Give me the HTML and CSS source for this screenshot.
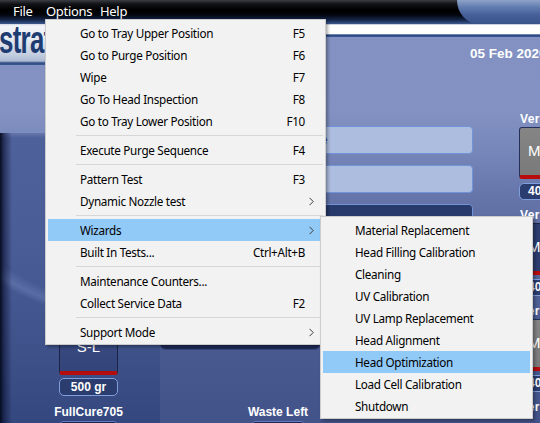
FILE: index.html
```html
<!DOCTYPE html>
<html lang="en">
<head>
<meta charset="utf-8">
<title>Options menu</title>
<link rel="stylesheet" href="styles.css">
</head>
<body>
<div class="app">
  <div class="menubar">
    <span class="mb-item mb-file">File</span>
    <span class="mb-item mb-options">Options</span>
    <span class="mb-item mb-help">Help</span>
    <span class="mb-fill"></span>
    <span class="mb-cap"></span>
  </div>
  <div class="top">
    <div class="logo"><span class="logo-text">stratasys</span></div>
    <div class="top-right">
      <div class="band"></div>
      <div class="date">05 Feb 2020</div>
    </div>
  </div>
  <div class="main">
    <div class="left-panel">
      <div class="cart">
        <div class="card card-support">S-L</div>
        <div class="weight">500 gr</div>
        <div class="cart-label">FullCure705</div>
        <div class="slot"></div>
      </div>
    </div>
    <div class="mid">
      <div class="fields">
        <div class="field light"><span class="field-text">Mode</span></div>
        <div class="field light"></div>
        <div class="field dark"></div>
      </div>
      <div class="status"></div>
      <div class="waste">
        <div class="cart-label">Waste Left</div>
        <div class="slot"></div>
      </div>
    </div>
    <div class="right">
      <div class="model">
        <div class="model-label">VeroWhite</div>
        <div class="card card-gray">M-L</div>
        <div class="weight weight-left">400 gr</div>
      </div>
      <div class="model">
        <div class="model-label">VeroBlue</div>
        <div class="card card-navy">M-L</div>
        <div class="weight weight-left">400 gr</div>
      </div>
      <div class="model">
        <div class="model-label">VeroBlack</div>
        <div class="card card-gray">M-L</div>
        <div class="weight weight-left">400 gr</div>
      </div>
      <div class="model">
        <div class="model-label">VeroClear</div>
      </div>
    </div>
  </div>

  <div class="menu main-menu">
    <div class="item"><span class="label">Go to Tray Upper Position</span><span class="key">F5</span><span class="arrow"></span></div>
    <div class="item"><span class="label">Go to Purge Position</span><span class="key">F6</span><span class="arrow"></span></div>
    <div class="item"><span class="label">Wipe</span><span class="key">F7</span><span class="arrow"></span></div>
    <div class="item"><span class="label">Go To Head Inspection</span><span class="key">F8</span><span class="arrow"></span></div>
    <div class="item"><span class="label">Go to Tray Lower Position</span><span class="key">F10</span><span class="arrow"></span></div>
    <div class="sep"></div>
    <div class="item"><span class="label">Execute Purge Sequence</span><span class="key">F4</span><span class="arrow"></span></div>
    <div class="sep"></div>
    <div class="item"><span class="label">Pattern Test</span><span class="key">F3</span><span class="arrow"></span></div>
    <div class="item"><span class="label">Dynamic Nozzle test</span><span class="key"></span><span class="arrow"><svg width="5" height="9" viewBox="0 0 5 9"><path d="M0.5 0.8 L4.2 4.5 L0.5 8.2" fill="none" stroke="#3a3a3a" stroke-width="1"/></svg></span></div>
    <div class="sep"></div>
    <div class="item active"><span class="label">Wizards</span><span class="key"></span><span class="arrow"><svg width="5" height="9" viewBox="0 0 5 9"><path d="M0.5 0.8 L4.2 4.5 L0.5 8.2" fill="none" stroke="#3a3a3a" stroke-width="1"/></svg></span></div>
    <div class="item"><span class="label">Built In Tests...</span><span class="key">Ctrl+Alt+B</span><span class="arrow"></span></div>
    <div class="sep"></div>
    <div class="item"><span class="label">Maintenance Counters...</span><span class="key"></span><span class="arrow"></span></div>
    <div class="item"><span class="label">Collect Service Data</span><span class="key">F2</span><span class="arrow"></span></div>
    <div class="sep"></div>
    <div class="item"><span class="label">Support Mode</span><span class="key"></span><span class="arrow"><svg width="5" height="9" viewBox="0 0 5 9"><path d="M0.5 0.8 L4.2 4.5 L0.5 8.2" fill="none" stroke="#3a3a3a" stroke-width="1"/></svg></span></div>
  </div>

  <div class="menu sub-menu">
    <div class="item"><span class="label">Material Replacement</span></div>
    <div class="item"><span class="label">Head Filling Calibration</span></div>
    <div class="item"><span class="label">Cleaning</span></div>
    <div class="item"><span class="label">UV Calibration</span></div>
    <div class="item"><span class="label">UV Lamp Replacement</span></div>
    <div class="item"><span class="label">Head Alignment</span></div>
    <div class="item active"><span class="label">Head Optimization</span></div>
    <div class="item"><span class="label">Load Cell Calibration</span></div>
    <div class="item"><span class="label">Shutdown</span></div>
  </div>
</div>
</body>
</html>
```

FILE: styles.css
```css
* { box-sizing: border-box; margin: 0; padding: 0; }

html, body {
  width: 540px;
  height: 423px;
  overflow: hidden;
  background: #43548b;
}

body {
  font-family: "Liberation Sans", Arial, sans-serif;
}

.app {
  position: relative;
  width: 540px;
  height: 423px;
  overflow: hidden;
  background: linear-gradient(to bottom,
    #8291c1 0, #8392c2 110px, #7787ba 150px, #6474a9 200px,
    #55669c 260px, #4a5b92 330px, #42538a 423px);
}

/* ---------- menu bar ---------- */
.menubar {
  display: flex;
  height: 24px;
  padding-left: 13px;
  background: linear-gradient(to bottom,
    #3a3d44 0, #121316 4px, #000 10px, #03060d 15px, #15264a 20px, #3d5a92 24px);
  font-family: "Segoe UI", "Noto Sans", sans-serif;
  font-size: 13px;
  letter-spacing: -0.3px;
  line-height: 22px;
  color: #fff;
}
.mb-item { flex: none; white-space: nowrap; }
.mb-file { width: 33px; }
.mb-options { width: 54px; }
.mb-help { width: 40px; }
.mb-fill { flex: 1; }
.mb-cap {
  flex: none;
  width: 83px;
  height: 24px;
  border-bottom-left-radius: 22px 24px;
  background: linear-gradient(to bottom, #8ea3c8 0, #627db0 7px, #45609a 15px, #3a5589 24px);
}

/* ---------- logo strip ---------- */
.top {
  display: flex;
  height: 41px;
}
.logo {
  flex: none;
  width: 200px;
  height: 41px;
  overflow: hidden;
  background: linear-gradient(to bottom,
    #cfd6e3 0, #f3f5f9 2px, #e8ecf3 14px, #c6cfe0 30px, #aebbd4 37px, #2f4b82 39px, #3c5a92 41px);
}
.logo-text {
  display: inline-block;
  margin-left: -1px;
  font-family: "Liberation Sans", Arial, sans-serif;
  font-weight: bold;
  font-size: 38px;
  line-height: 41px;
  letter-spacing: -1px;
  color: #1e3c72;
  transform: scaleX(0.68);
  transform-origin: left center;
  margin-top: -4px;
}
.top-right {
  flex: 1;
  display: flex;
  flex-direction: column;
}
.band {
  height: 13px;
  background: linear-gradient(to bottom,
    #c9d1e1 0, #c9d1e1 1px, #ffffff 1px, #ffffff 10px, #b3c0da 10px, #2a4680 11px, #3a5894 13px);
}
.date {
  padding-left: 270px;
  margin-top: 10px;
  font-weight: bold;
  font-size: 13.5px;
  line-height: 14px;
  color: #fff;
  white-space: nowrap;
}

/* ---------- main area ---------- */
.main {
  display: flex;
  height: 358px;
}

.left-panel {
  flex: none;
  width: 160px;
  margin-top: 68px;
  height: 290px;
  background:
    linear-gradient(to right, rgba(4, 8, 30, 0.95) 0, rgba(6, 12, 40, 0.55) 4px, rgba(6, 12, 40, 0) 12px),
    radial-gradient(ellipse 230px 160px at 150px 30px, rgba(255,255,255,0) 90%, rgba(160,185,235,0.22) 96%, rgba(255,255,255,0) 100%),
    linear-gradient(to bottom, #6677ac 0, #4f619a 5px, #4a5c96 120px, #3e5189 220px, #34487f 290px);
}
.cart {
  display: flex;
  flex-direction: column;
  width: 59px;
  margin-left: 59px;
  margin-top: 190px;
}
.cart > *, .mid > *, .right > *, .model > * { flex-shrink: 0; }

.card {
  height: 52px;
  border: 1px solid #1b2447;
  border-bottom: 4px solid #b30d0d;
  border-radius: 3px;
  font-size: 15px;
  line-height: 46px;
  color: #fff;
  white-space: nowrap;
}
.card-support {
  text-align: center;
  background: linear-gradient(to bottom, #3b4d82, #32447a);
}
.weight {
  margin-top: 3px;
  height: 18px;
  border: 1px solid #7f9fdc;
  border-radius: 5px;
  background: #2b3c6e;
  font-weight: bold;
  font-size: 12px;
  line-height: 16px;
  color: #fff;
  text-align: center;
  white-space: nowrap;
}
.cart-label {
  display: flex;
  justify-content: center;
  margin-top: 10px;
  height: 13px;
  font-weight: bold;
  font-size: 12px;
  line-height: 13px;
  color: #fff;
  white-space: nowrap;
}
.slot {
  margin-top: 2px;
  margin-left: 1px;
  width: 57px;
  height: 20px;
  border: 1px solid #5f7cc0;
  border-radius: 3px;
  background: #1b2550;
}

.mid {
  flex: none;
  width: 316px;
  display: flex;
  flex-direction: column;
}
.fields {
  display: flex;
  flex-direction: column;
  gap: 11px;
  margin-top: 61px;
  margin-left: 73px;
  width: 240px;
}
.field {
  height: 28px;
  border: 1px solid #7193d8;
  border-radius: 4px;
}
.field.light { background: #adbde0; }
.field.dark { background: #283a6b; }
.field-text {
  display: block;
  padding-left: 61px;
  font-size: 13px;
  line-height: 26px;
  color: #1e2b50;
}
.status {
  margin-top: 8px;
  width: 160px;
  height: 110px;
  border-radius: 0 0 6px 6px;
  background: #1e2a54;
  border-bottom: 1px solid #33467c;
}
.waste {
  display: flex;
  flex-direction: column;
  width: 52px;
  margin-left: 92px;
  margin-top: 46px;
}
.waste .slot { width: 52px; margin-left: 0; }

.right {
  flex: none;
  width: 64px;
  padding-left: 43px;
  padding-top: 47px;
  display: flex;
  flex-direction: column;
}
.model {
  display: flex;
  flex-direction: column;
  width: 60px;
  height: 96px;
}
.model-label {
  padding-left: 1px;
  height: 14px;
  font-weight: bold;
  font-size: 12px;
  letter-spacing: 0.4px;
  line-height: 14px;
  color: #fff;
  white-space: nowrap;
}
.card-gray {
  margin-top: 1px;
  padding-left: 8px;
  background: linear-gradient(to bottom, #858585, #7a7a7a);
  border-color: #243058;
  border-bottom-color: #b80c0c;
}
.card-navy {
  margin-top: 1px;
  padding-left: 8px;
  background: #2c3c6e;
  border-bottom-color: #b80c0c;
}
.weight-left {
  margin-top: 4px;
  height: 17px;
  line-height: 15px;
  text-align: left;
  padding-left: 8px;
}

/* ---------- popup menus ---------- */
.menu {
  position: absolute;
  background: #f2f2f2;
  border: 1px solid #cccccc;
  padding: 2px 2px 1px 2px;
  box-shadow: 2px 2px 3px rgba(0, 0, 0, 0.32);
  font-family: "Segoe UI", "Noto Sans", sans-serif;
  font-size: 11.7px;
  letter-spacing: -0.3px;
  color: #000;
}
.main-menu {
  left: 45px;
  top: 19px;
  width: 281px;
  z-index: 2;
}
.sub-menu {
  left: 320px;
  top: 216px;
  width: 213px;
  z-index: 3;
}
.item {
  display: flex;
  align-items: center;
  height: 22px;
  padding-left: 32px;
  white-space: nowrap;
}
.item.active { background: #91c9f7; }
.label { flex: 1; }
.key { flex: none; }
.arrow {
  flex: none;
  width: 18px;
  height: 22px;
  display: flex;
  align-items: center;
  padding-left: 4px;
}
.sep {
  height: 7px;
  background: linear-gradient(#d7d7d7, #d7d7d7) no-repeat 28px 3px / calc(100% - 28px) 1px;
}
```
